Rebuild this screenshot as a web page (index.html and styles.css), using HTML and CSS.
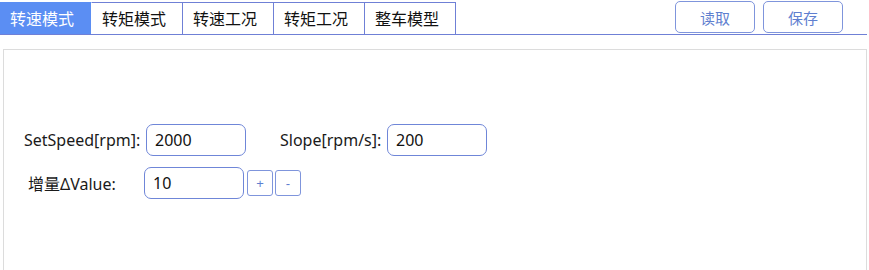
FILE: index.html
```html
<!DOCTYPE html>
<html lang="zh">
<head>
<meta charset="utf-8">
<link rel="stylesheet" href="styles.css">
</head>
<body>
<div class="page">
  <div class="header">
    <div class="tabs">
      <div class="tab active">转速模式</div>
      <div class="tab">转矩模式</div>
      <div class="tab">转速工况</div>
      <div class="tab">转矩工况</div>
      <div class="tab">整车模型</div>
    </div>
    <div class="actions">
      <button class="btn">读取</button>
      <button class="btn">保存</button>
    </div>
  </div>
  <div class="panel">
    <div class="row row1">
      <label class="lbl lbl-speed">SetSpeed[rpm]:</label>
      <input class="field" value="2000">
      <label class="lbl lbl-slope">Slope[rpm/s]:</label>
      <input class="field" value="200">
    </div>
    <div class="row row2">
      <label class="lbl lbl-inc">增量ΔValue:</label>
      <input class="field" value="10">
      <button class="step step-plus">+</button>
      <button class="step">-</button>
    </div>
  </div>
</div>
</body>
</html>
```

FILE: styles.css
```css
html, body {
  margin: 0;
  padding: 0;
  background: #ffffff;
  overflow: hidden;
}
body {
  font-family: "Noto Sans", "Noto Sans CJK SC", sans-serif;
  color: #1a1a1a;
  width: 869px;
  height: 270px;
}
.page {
  width: 867px;
}
.header {
  display: flex;
  justify-content: space-between;
  align-items: flex-start;
  height: 34px;
  border-bottom: 1px solid #6f80d6;
}
.tabs {
  display: flex;
  margin-top: 2px;
}
.tab {
  width: 80px;
  height: 31px;
  border-top: 1px solid #6f80d6;
  border-right: 1px solid #6f80d6;
  font-family: "Noto Sans CJK SC", sans-serif;
  font-size: 16px;
  line-height: 31px;
  padding-left: 10px;
  color: #111;
}
.tab.active {
  width: 81px;
  background: #5b8ef3;
  color: #ffffff;
  border-top-color: #5b8ef3;
  border-right-color: #ffffff;
}
.actions {
  display: flex;
  gap: 8px;
  margin-top: 1px;
  margin-right: 24px;
}
.btn {
  width: 80px;
  height: 32px;
  border: 1px solid #7f95dc;
  border-radius: 5px;
  background: #ffffff;
  color: #5f7fd0;
  font-family: "Noto Sans CJK SC", sans-serif;
  font-size: 15px;
  padding: 0;
}
.panel {
  margin: 14px 0 0 3px;
  border: 1px solid #dcdcdc;
  border-bottom: none;
  height: 221px;
  padding-top: 74px;
  box-sizing: border-box;
}
.row {
  display: flex;
  align-items: center;
}
.row1 {
  height: 32px;
}
.row2 {
  margin-top: 11px;
  height: 32px;
}
.lbl {
  font-size: 16px;
  color: #1a1a1a;
}
.lbl-speed {
  margin-left: 20px;
  width: 122px;
}
.lbl-slope {
  margin-left: 34px;
  width: 107px;
}
.lbl-inc {
  margin-left: 24px;
  width: 116px;
}
.field {
  width: 100px;
  height: 32px;
  box-sizing: border-box;
  border: 1px solid #6f86d8;
  border-radius: 7px;
  padding: 0 8px;
  font-family: "Noto Sans", sans-serif;
  font-size: 16px;
  color: #111;
  outline: none;
}
.step {
  width: 26px;
  height: 26px;
  box-sizing: border-box;
  border: 1px solid #7f95dc;
  border-radius: 3px;
  background: #fff;
  color: #5f7fd0;
  font-size: 13px;
  padding: 0;
  margin-left: 2px;
}
.step-plus {
  margin-left: 3px;
}
```
